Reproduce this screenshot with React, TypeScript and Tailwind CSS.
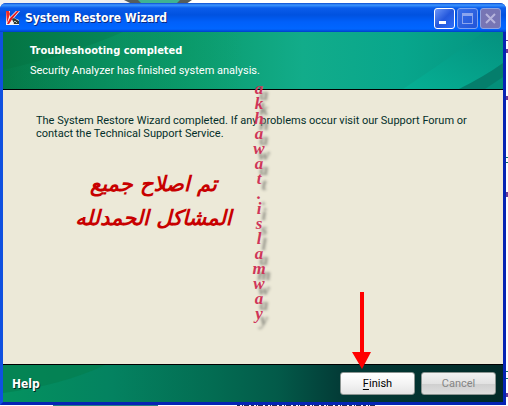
import React from "react";
import clsx from "clsx";

const WATERMARK = "akhawat.islamway";

function HeaderArt() {
  return (
    <svg
      className="absolute inset-0 h-full w-full"
      viewBox="0 0 500 57"
      preserveAspectRatio="none"
      aria-hidden="true"
    >
      <defs>
        <linearGradient id="headerBase" x1="0" y1="0" x2="1" y2="0">
          <stop offset="0" stopColor="#047543" />
          <stop offset="0.2" stopColor="#068556" />
          <stop offset="0.38" stopColor="#0b9b6c" />
          <stop offset="0.6" stopColor="#12ac8a" />
          <stop offset="0.8" stopColor="#08a68c" />
          <stop offset="1" stopColor="#049480" />
        </linearGradient>
        <linearGradient id="headerGlow" x1="0" y1="0" x2="1" y2="0">
          <stop offset="0" stopColor="#0b9a68" stopOpacity="0.1" />
          <stop offset="0.5" stopColor="#0b9a68" stopOpacity="0.45" />
          <stop offset="1" stopColor="#0b9a68" stopOpacity="0" />
        </linearGradient>
        <linearGradient id="headerRay" x1="0" y1="1" x2="1" y2="0">
          <stop offset="0" stopColor="#06b094" />
          <stop offset="1" stopColor="#04917f" />
        </linearGradient>
      </defs>
      <rect width="500" height="57" fill="url(#headerBase)" />
      <path d="M0 38 Q70 22 120 0 H240 V57 H0Z" fill="url(#headerGlow)" />
      <path d="M400 57 Q450 24 480 0 H500 V57Z" fill="url(#headerRay)" />
      <path d="M456 57 Q482 44 500 31 V57Z" fill="#057e6c" />
      <path d="M482 57 L500 45 V57Z" fill="#048f7a" />
    </svg>
  );
}

function FooterArt() {
  return (
    <svg
      className="absolute inset-0 h-full w-full"
      viewBox="0 0 500 37"
      preserveAspectRatio="none"
      aria-hidden="true"
    >
      <defs>
        <linearGradient id="footerBase" x1="0" y1="0" x2="1" y2="0">
          <stop offset="0" stopColor="#04925f" />
          <stop offset="0.22" stopColor="#048260" />
          <stop offset="0.42" stopColor="#036c52" />
          <stop offset="0.55" stopColor="#035a49" />
          <stop offset="0.68" stopColor="#033a36" />
          <stop offset="1" stopColor="#022a28" />
        </linearGradient>
      </defs>
      <rect width="500" height="37" fill="url(#footerBase)" />
      <path d="M0 0 H102 Q60 20 0 28Z" fill="#047f50" opacity="0.7" />
    </svg>
  );
}

function KasperskyIcon() {
  return (
    <svg className="h-4 w-4 shrink-0" viewBox="0 0 16 16" aria-hidden="true">
      <path d="M1 1 H5 V7 L11 1 H15 L9 8 L14 10 V15 H1Z" fill="#f4f4f4" />
      <path d="M1 1 H4 L5 4 L2 13Z" fill="#f02a24" />
      <path d="M2 14 L5 8 L12 1 H14 L8 8 L4 14Z" fill="#e31b22" />
      <path d="M7 9 L9 8 L14 11 V14 H9Z" fill="#2e3a36" />
      <path d="M8 13 L10 11 L12 13" fill="none" stroke="#b5c5bd" />
    </svg>
  );
}

interface CaptionButtonProps {
  label: string;
  className: string;
  disabled?: boolean;
  children: React.ReactNode;
}

function CaptionButton({ label, className, disabled, children }: CaptionButtonProps) {
  return (
    <button
      type="button"
      aria-label={label}
      disabled={disabled}
      className={clsx(
        "flex h-[21px] w-[21px] items-center justify-center rounded-[3px] border",
        className,
      )}
    >
      <svg className="h-[19px] w-[19px]" viewBox="0 0 19 19" aria-hidden="true">
        {children}
      </svg>
    </button>
  );
}

function TitleBar() {
  return (
    <header className="flex h-[29px] items-center justify-between rounded-t-[6px] bg-[linear-gradient(#0a4ad0_0px,#3c96ff_2px,#0a5cea_5px,#0052e0_12px,#0060fa_19px,#0066ff_26px,#0040c8_29px)] pt-px pr-[5px] pl-[5px]">
      <div className="flex items-center gap-[4px]">
        <KasperskyIcon />
        <h1 className="font-['DejaVu_Sans_Condensed','DejaVu_Sans',sans-serif] text-[12px] leading-[16px] font-bold text-white [text-shadow:1px_1px_0_#0a2a80]">
          System Restore Wizard
        </h1>
      </div>
      <div className="flex gap-[2px]">
        <CaptionButton
          label="Minimize"
          className="border-white bg-[linear-gradient(135deg,#6c96f8,#2458dc_50%,#2f70f8)]"
        >
          <rect x="4" y="12" width="7" height="3" fill="#fff" />
        </CaptionButton>
        <CaptionButton
          label="Maximize"
          disabled
          className="border-[#7da2f0] bg-[linear-gradient(135deg,#3a70e8,#2254d8)]"
        >
          <path d="M4 4 H15 V15 H4Z M5 7 V14 H14 V7Z" fill="#8ba5ee" fillRule="evenodd" />
        </CaptionButton>
        <CaptionButton
          label="Close"
          disabled
          className="border-[#8fa4e0] bg-[#7775b4]"
        >
          <path d="M5 5 L14 14 M14 5 L5 14" stroke="#b6b4dc" strokeWidth="2" />
        </CaptionButton>
      </div>
    </header>
  );
}

function Watermark() {
  return (
    <div
      aria-label={WATERMARK}
      className="pointer-events-none absolute top-[78px] left-[249px] flex w-5 flex-col items-center font-['Liberation_Serif',serif] text-[17px] leading-[15px] font-bold text-[#cf3558] italic [text-shadow:5px_6px_3px_#88887e]"
    >
      {WATERMARK.split("").map((letter, i) => (
        <span key={i}>{letter}</span>
      ))}
    </div>
  );
}

function Arrow() {
  return (
    <svg
      className="pointer-events-none absolute right-[135px] bottom-[35px] h-[78px] w-[19px]"
      viewBox="0 0 19 78"
      aria-hidden="true"
    >
      <path d="M8 0 H12 V60 H19 L10 77 L0 60 H8Z" fill="#f00" />
    </svg>
  );
}

// slivers of the desktop that peek out around the window
function Backdrop() {
  return (
    <svg className="absolute inset-0 h-full w-full" viewBox="0 0 508 406" aria-hidden="true">
      <rect width="130" height="10" fill="#f0f0f0" />
      <path d="M124 0 H192 L186 4 H132Z" fill="#555d5b" />
      <path d="M138 0 H180 L176 4 H142Z" fill="#3fb391" />
      <path d="M53 405.5 H158" stroke="#2a7f86" />
      <path d="M237 405.5 H376" stroke="#222a55" strokeDasharray="3 2 1 1 5 2" />
      <path d="M506 157.5 H508 M506 162.5 H508 M506 371.5 H508 M506 378.5 H508" stroke="#0b7265" />
      <path d="M507 40 V41 M507 49 V53 M507 96 V100 M507 192 V197 M507 393 V397" stroke="#6a3c98" strokeWidth="2" />
    </svg>
  );
}

export default function App() {
  return (
    <div className="relative flex h-screen flex-col overflow-hidden bg-white pt-[3px] pr-[2px] pb-px font-[Roboto,sans-serif] text-[11px]">
      <Backdrop />
      <div className="relative flex flex-1 flex-col rounded-t-[6px] bg-[#0a3fd8]">
        <TitleBar />
        <div className="flex flex-1 flex-col border-x-[3px] border-t-0 border-b-[3px] border-r-[#0524b4] border-b-[#0524b4] border-l-[#0f50e0]">
          <section className="relative border-b border-black px-[27px] pt-[12px] pb-[11px] text-white">
            <HeaderArt />
            <h2 className="relative font-['DejaVu_Sans_Condensed','DejaVu_Sans',sans-serif] leading-[14px] font-bold">
              Troubleshooting completed
            </h2>
            <p className="relative mt-[6px] leading-[14px]">
              Security Analyzer has finished system analysis.
            </p>
          </section>

          <main className="flex-1 bg-[#ece9d8] pt-[24px] pr-[30px] pl-[33px]">
            <p className="leading-[13px] text-[#042f2a]">
              The System Restore Wizard completed. If any problems occur visit our Support Forum or
              contact the Technical Support Service.
            </p>
            <div
              dir="rtl"
              lang="ar"
              className="mt-[27px] w-[235px] text-center font-['DejaVu_Sans',sans-serif] text-[21px] leading-[34px] font-bold text-[#c80000] italic"
            >
              <p>تم اصلاح جميع</p>
              <p>المشاكل الحمدلله</p>
            </div>
          </main>

          <footer className="relative flex h-[38px] items-center justify-between border-t border-black pr-[7px] pl-[9px]">
            <FooterArt />
            <a
              href="#help"
              className="relative font-['DejaVu_Sans_Condensed','DejaVu_Sans',sans-serif] text-[12px] leading-[16px] font-bold text-white [text-shadow:1px_1px_0_#002a20]"
            >
              Help
            </a>
            <div className="relative flex gap-[6px]">
              <button
                type="button"
                className="h-[23px] w-[75px] rounded-[3px] border border-[#8b9491] bg-[linear-gradient(#fff,#f4f4f4_50%,#e4e4e4)] leading-[16px] text-black"
              >
                <span className="underline underline-offset-2">F</span>inish
              </button>
              <button
                type="button"
                disabled
                className="h-[23px] w-[75px] rounded-[3px] border border-[#8b9491] bg-[linear-gradient(#f2f2f2,#e2e2e2_50%,#cecece_51%,#dedede)] leading-[16px] text-[#858585]"
              >
                Cancel
              </button>
            </div>
          </footer>
        </div>
        <Watermark />
        <Arrow />
      </div>
    </div>
  );
}
